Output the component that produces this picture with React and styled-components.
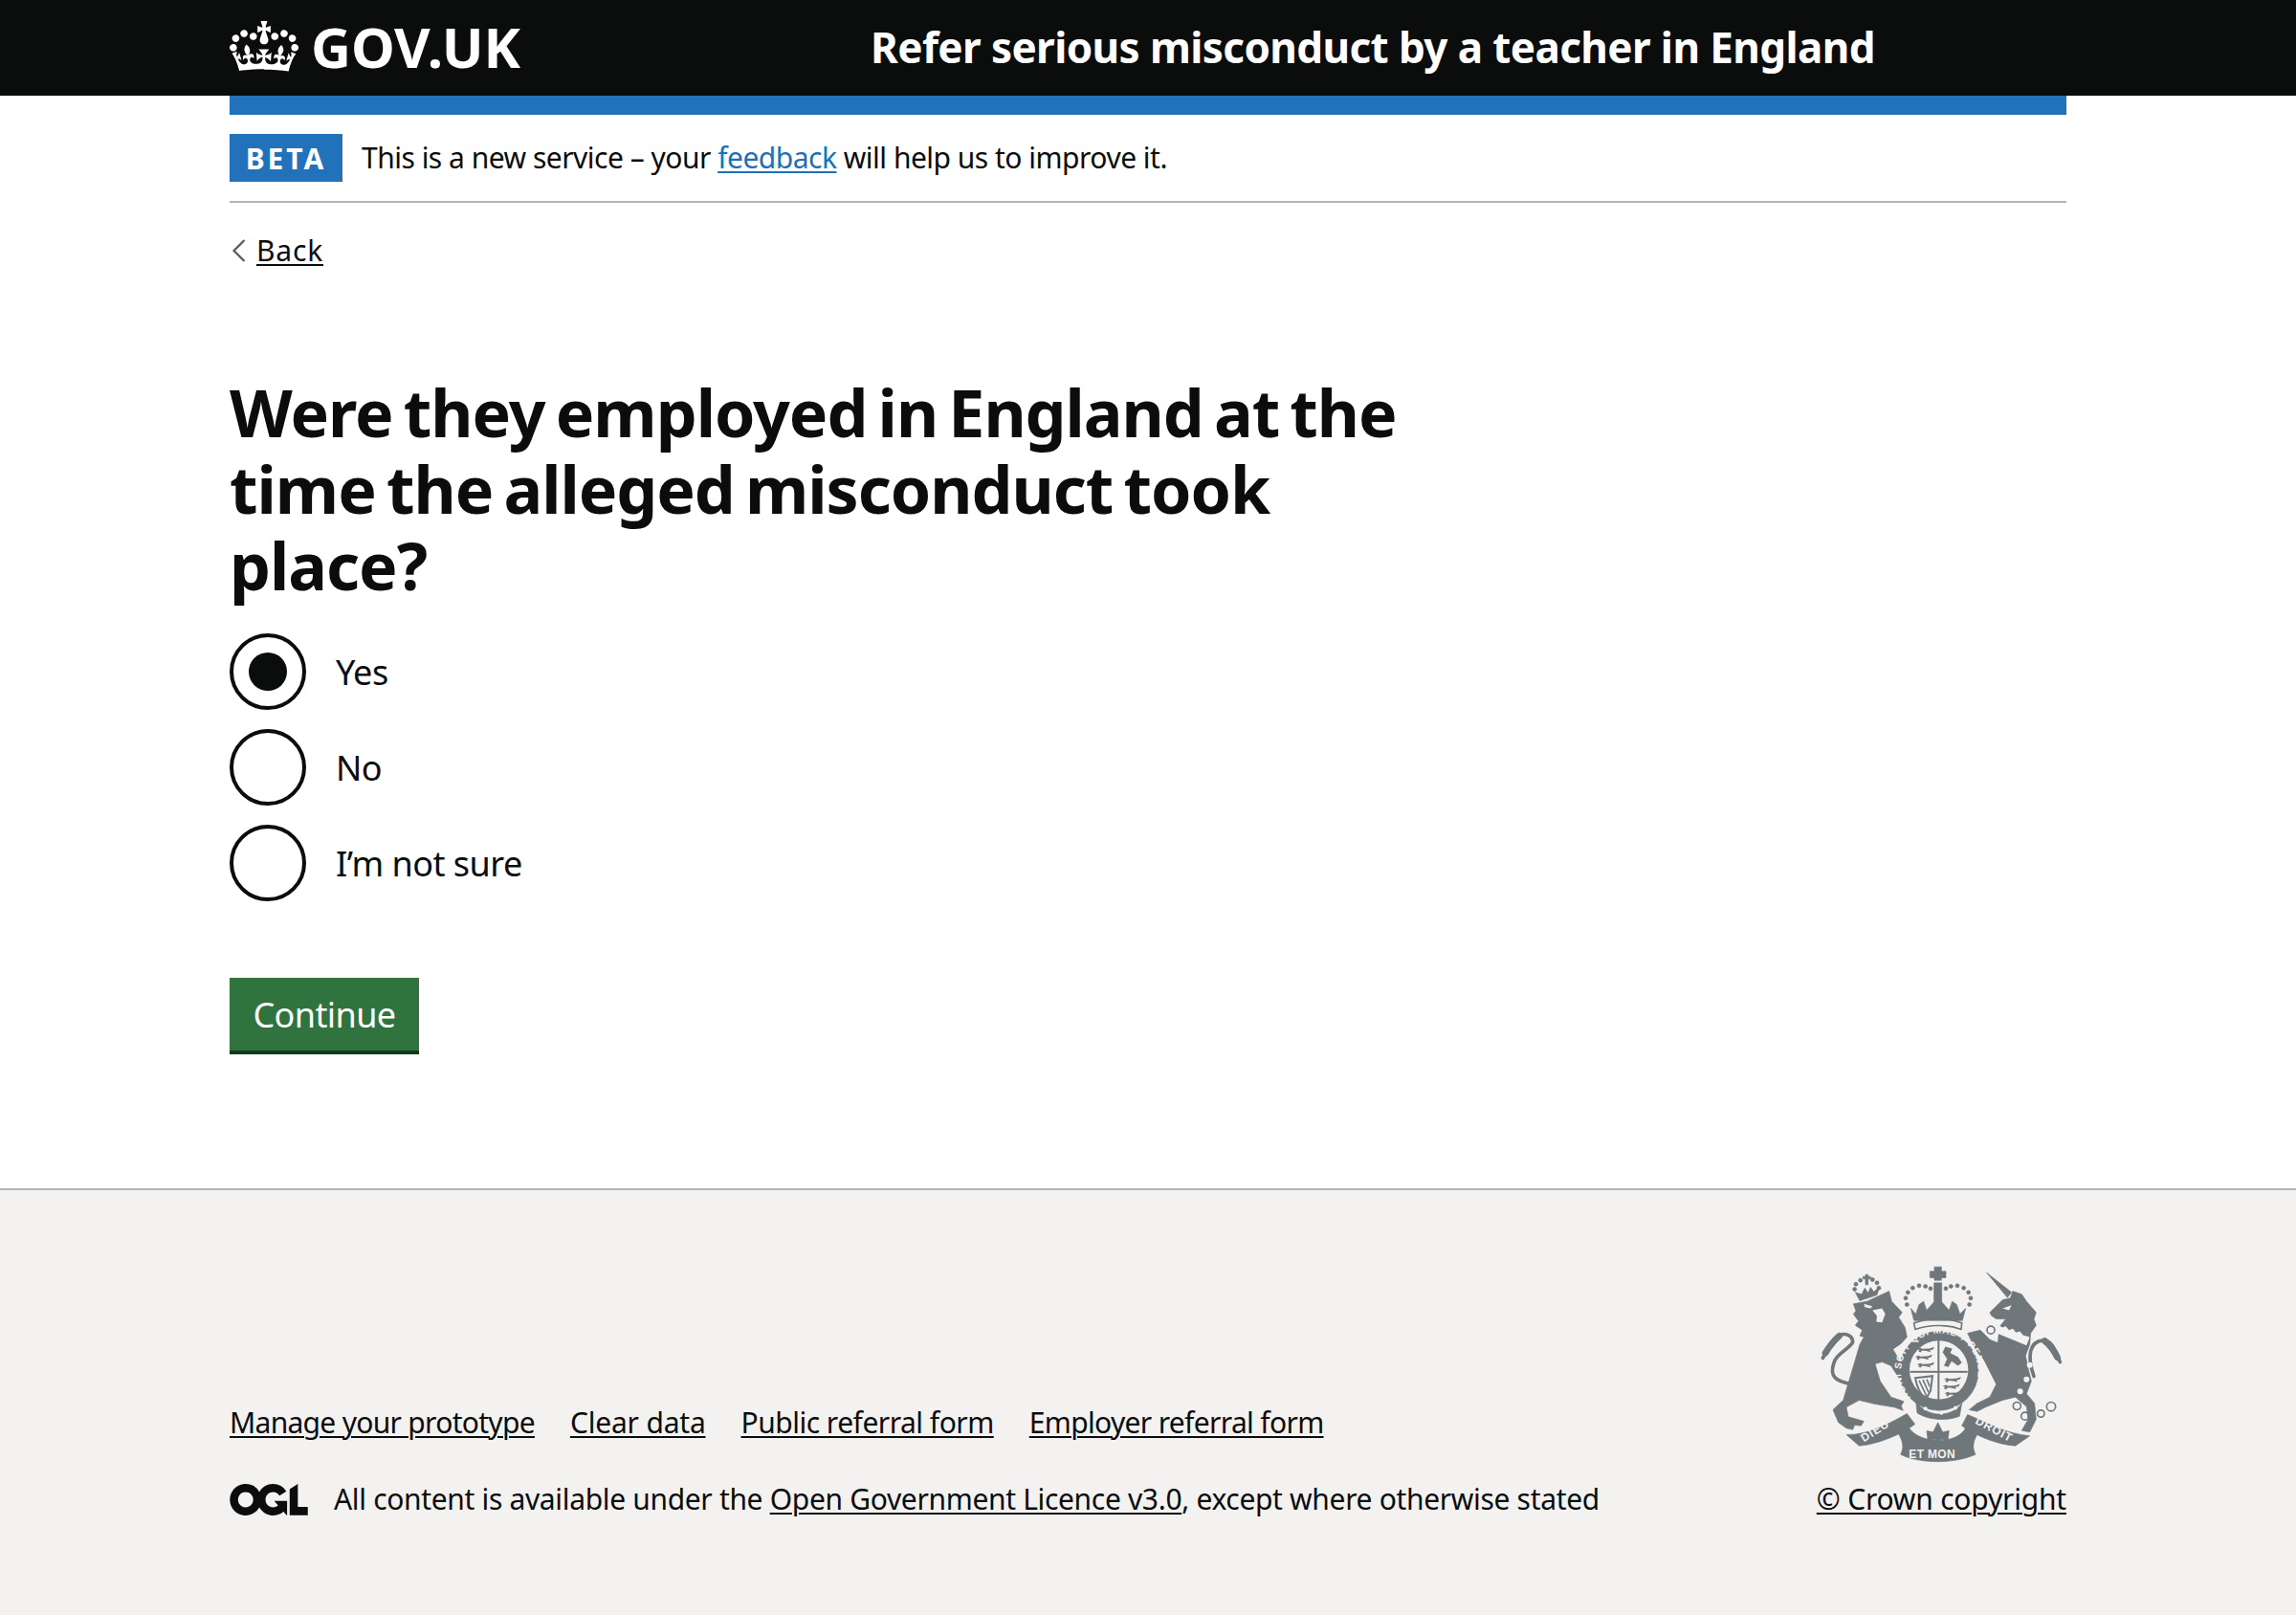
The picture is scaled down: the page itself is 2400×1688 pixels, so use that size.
import React from "react"
import styled, { createGlobalStyle } from "styled-components"

const black = "#0b0c0c"
const blue = "#2272bb"
const grey = "#b1b4b6"
const crest = "#6f777b"
const footerBg = "#f3f2f1"
const fontStack = `"Noto Sans", "Open Sans", Arial, sans-serif`

const GlobalStyle = createGlobalStyle`
    html, body {
        margin: 0;
        padding: 0;
        background: #fff;
        color: ${black};
        font-family: ${fontStack};
    }
    a {
        color: inherit;
        text-underline-offset: 3px;
        text-decoration-thickness: 2px;
    }
`

const Page = styled.div`
    min-height: 1688px;
    display: flex;
    flex-direction: column;
`

const Container = styled.div`
    width: 1920px;
    margin: 0 auto;
`

const Header = styled.header`
    background: ${black};
    height: 100px;
    color: #fff;
`

const HeaderRow = styled(Container)`
    height: 100px;
    padding-bottom: 3px;
    box-sizing: border-box;
    display: flex;
    align-items: center;
`

const LogoLink = styled.div`
    width: 670px;
    display: flex;
    align-items: center;
    gap: 13px;
`

const Wordmark = styled.span`
    font-size: 58px;
    font-weight: 700;
    letter-spacing: -0.1px;
    line-height: 1;
`

const ServiceName = styled.span`
    font-size: 44px;
    font-weight: 700;
    letter-spacing: -0.6px;
`

const BlueBar = styled(Container)`
    height: 20px;
    background: ${blue};
`

const Banner = styled(Container)`
    display: flex;
    align-items: center;
    gap: 20px;
    padding: 20px 0;
    border-bottom: 2px solid ${grey};
`

const Tag = styled.strong`
    width: 118px;
    height: 50px;
    background: ${blue};
    color: #fff;
    font-size: 30px;
    font-weight: 700;
    letter-spacing: 3px;
    display: flex;
    align-items: center;
    justify-content: center;
`

const SmallText = styled.span`
    font-size: 30px;
    line-height: 40px;
    letter-spacing: ${(p) => p.$spacing || "0"};
`

const BlueLink = styled.a`
    color: #1d70b8;
`

const BackRow = styled(Container)`
    display: flex;
    align-items: center;
    gap: 10px;
    margin-top: 30px;
    height: 40px;
    padding-left: 2px;
    box-sizing: border-box;
`

const Main = styled(Container)`
    padding-top: 110px;
    padding-bottom: 140px;
`

const Heading = styled.h1`
    width: 1280px;
    margin: -1px 0 31px;
    font-size: 68px;
    line-height: 80px;
    font-weight: 700;
    letter-spacing: -1px;
    word-spacing: -5.5px;
`

const RadioList = styled.div`
    display: flex;
    flex-direction: column;
    gap: 20px;
    margin-bottom: 80px;
`

const RadioRow = styled.label`
    display: flex;
    align-items: center;
    gap: 31px;
    height: 80px;
`

const RadioCircle = styled.span`
    width: 80px;
    height: 80px;
    box-sizing: border-box;
    border: 4px solid ${black};
    border-radius: 50%;
    display: flex;
    align-items: center;
    justify-content: center;

    &::after {
        content: "";
        display: ${(p) => (p.$checked ? "block" : "none")};
        width: 40px;
        height: 40px;
        border-radius: 50%;
        background: ${black};
    }
`

const RadioLabel = styled.span`
    font-size: 36px;
    line-height: 50px;
    letter-spacing: -0.5px;
    padding-top: 2px;
`

const Button = styled.button`
    display: block;
    width: 198px;
    height: 80px;
    box-sizing: border-box;
    padding: 0 0 4px;
    border: 0;
    background: #31733f;
    box-shadow: inset 0 -4px 0 #0f3a1d;
    color: #fff;
    font-family: ${fontStack};
    font-size: 36px;
    letter-spacing: -0.6px;
`

const Footer = styled.footer`
    flex: 1;
    background: ${footerBg};
    border-top: 2px solid ${grey};
`

const FooterRow = styled(Container)`
    display: flex;
    justify-content: space-between;
    align-items: flex-end;
    padding-top: 66px;
`

const FooterLinks = styled.div`
    display: flex;
    gap: 37px;
    margin-bottom: 40px;
`

const FooterMeta = styled.div`
    display: flex;
    align-items: center;
    gap: 27px;
`

const FooterLeft = styled.div`
    display: flex;
    flex-direction: column;
`

const FooterRight = styled.div`
    display: flex;
    flex-direction: column;
    align-items: flex-end;
    gap: 10px;
`

const crownPath =
    "M25 30.2c3.5 1.5 7.7-.2 9.1-3.7 1.5-3.6-.2-7.8-3.9-9.2-3.6-1.4-7.6.3-9.1 3.9-1.4 3.5.3 7.5 3.9 9zM9 39.5c3.6 1.5 7.8-.2 9.2-3.7 1.5-3.6-.2-7.8-3.9-9.1-3.6-1.5-7.6.2-9.1 3.8-1.4 3.5.3 7.5 3.8 9zM4.4 57.2c3.5 1.5 7.7-.2 9.1-3.8 1.5-3.6-.2-7.7-3.9-9.1-3.5-1.5-7.6.3-9.1 3.8-1.4 3.5.3 7.6 3.9 9.1zm38.3-21.4c3.5 1.5 7.7-.2 9.1-3.8 1.5-3.6-.2-7.7-3.9-9.1-3.6-1.5-7.6.3-9.1 3.8-1.3 3.6.4 7.7 3.9 9.1zm64.4-5.6c-3.6 1.5-7.8-.2-9.1-3.7-1.5-3.6.2-7.8 3.8-9.2 3.6-1.4 7.7.3 9.2 3.9 1.3 3.5-.4 7.5-3.9 9zm15.9 9.3c-3.6 1.5-7.7-.2-9.1-3.7-1.5-3.6.2-7.8 3.7-9.1 3.6-1.5 7.7.2 9.2 3.8 1.5 3.5-.3 7.5-3.8 9zm4.7 17.7c-3.6 1.5-7.8-.2-9.2-3.8-1.5-3.6.2-7.7 3.9-9.1 3.6-1.5 7.7.3 9.2 3.8 1.3 3.5-.4 7.6-3.9 9.1zM89.3 35.8c-3.6 1.5-7.8-.2-9.2-3.8-1.4-3.6.2-7.7 3.9-9.1 3.6-1.5 7.7.3 9.2 3.8 1.4 3.6-.3 7.7-3.9 9.1zM69.7 17.7l8.9 4.7V9.3l-8.9 2.8c-.2-.3-.5-.6-.9-.9L72.4 0H59.6l3.6 11.2c-.3.3-.6.5-.9.9l-8.8-2.8v13.1l8.8-4.7c.3.3.6.7.9.9l-5 15.4v.1c-.2.8-.4 1.6-.4 2.4 0 4.1 3.1 7.5 7 8.1h.2c.3 0 .7.1 1 .1.4 0 .7 0 1-.1h.2c4-.6 7.1-4.1 7.1-8.1 0-.8-.1-1.7-.4-2.4V34l-5.1-15.4c.4-.2.7-.6 1-.9zM66 92.8c16.9 0 32.8 1.1 47.1 3.2 4-16.9 8.9-26.7 14-33.5l-9.6-3.4c1 4.9 1.1 7.2 0 10.2-1.5-1.4-3-4.3-4.2-8.7L108.6 76c2.8-2 5-3.2 7.5-3.3-4.4 9.4-10 11.9-13.6 11.2-4.3-.8-6.3-4.6-5.6-7.9 1-4.7 5.7-5.9 8-.5 4.3-8.7-3-11.4-7.6-8.8 7.1-7.2 7.9-13.5 2.1-21.1-8 6.1-8.1 12.3-4.5 20.8-4.7-5.4-12.1-2.5-9.5 6.2 3.4-5.2 7.9-2 7.2 3.1-.6 4.3-6.4 7.8-13.5 7.2-10.3-.9-10.9-8-11.2-13 2.5-.5 7.1 1.8 11 7.3L80.2 60c-4.1 4.4-8 5.3-12.3 5.4 1.4-4.4 8-11.6 8-11.6H55.5s6.4 7.2 7.9 11.6c-4.2-.1-8-1-12.3-5.4l1.4 16.4c3.9-5.5 8.5-7.7 10.9-7.3-.3 5-.7 12.1-10.9 13-7.2.6-12.9-2.9-13.5-7.2-.7-5 3.8-8.3 7.1-3.1 2.7-8.7-4.6-11.6-9.4-6.2 3.7-8.5 3.6-14.7-4.6-20.8-5.8 7.6-5 13.9 2.2 21.1-4.7-2.6-11.9.1-7.7 8.8 2.3-5.5 7.1-4.2 8.1.5.7 3.3-1.3 7.1-5.7 7.9-3.5.7-9-1.8-13.5-11.2 2.5.1 4.7 1.3 7.5 3.3l-4.7-15.4c-1.2 4.4-2.7 7.2-4.3 8.7-1.1-3-.9-5.3 0-10.2l-9.5 3.4c5 6.9 9.9 16.7 14 33.5 14.8-2.1 30.8-3.2 47.7-3.2z"

const oglPath =
    "M421.5 142.8V.1l-50.7 32.3v161.1h112.4v-50.7zm-122.3-9.6A47.12 47.12 0 0 1 221 97.8c0-26 21.1-47.1 47.1-47.1 16.7 0 31.4 8.7 39.7 21.8l42.7-27.2A97.63 97.63 0 0 0 268.1 0c-36.5 0-68.3 20.1-85.1 49.7A98 98 0 0 0 97.8 0C43.9 0 0 43.9 0 97.8s43.9 97.8 97.8 97.8c36.5 0 68.3-20.1 85.1-49.7a97.76 97.76 0 0 0 149.6 25.4l19.4 22.2h3v-87.8h-80l24.3 27.5zM97.8 145c-26 0-47.1-21.1-47.1-47.1s21.1-47.1 47.1-47.1 47.2 21 47.2 47S123.8 145 97.8 145"

function Crown() {
    return (
        <svg width="72" height="53" viewBox="0 0 132 97" fill="#fff">
            <path d={crownPath} />
        </svg>
    )
}

function OglLogo() {
    return (
        <svg width="82" height="33" viewBox="0 0 483.2 195.7" fill={black}>
            <path d={oglPath} />
        </svg>
    )
}

// three walking lions for the England quarters
function Passant({ x, y }) {
    return (
        <g transform={`translate(${x} ${y})`}>
            <path d="M0 4 L10 0 L16 3 L38 2 L54 -3 L50 5 L40 7 L42 13 L34 11 L24 9 L14 9 L12 14 L4 12 L7 7 Z" />
        </g>
    )
}

// Royal arms, drawn by eye. The viewBox is in 3x px so it lines up with zoomed crops.
function RoyalArms() {
    const crownDots = [
        [340, 160], [336, 140], [343, 122], [358, 108], [378, 101], [398, 103], [414, 110],
        [462, 110], [478, 103], [498, 101], [518, 108], [533, 122], [540, 140], [536, 160],
    ]
    const lionCrownDots = [[176, 112], [180, 96], [194, 84], [232, 82], [246, 92], [252, 108]]
    const rings = [[685, 478, 12], [710, 510, 12], [760, 502, 11], [792, 480, 14], [603, 240, 12], [592, 325, 12]]
    const spots = [[725, 350, 9], [715, 395, 9], [695, 432, 9]]
    return (
        <svg width="280" height="227" viewBox="0 0 840 680">
            <defs>
                <path id="garter-arc" d="M352 452 A121 121 0 1 1 522 462" />
            </defs>
            <g fill={crest} stroke={crest} strokeWidth="2" strokeLinejoin="round">
                {/* lion */}
                <path d="M172 158 L215 150 L284 118 L292 150 L325 185 L314 200 L334 232 L340 262 L322 282 L296 300 L338 372 L345 395 L330 390 L322 402 L308 380 L290 352 L262 340 L240 346 L256 400 L290 450 L330 464 L322 478 L328 492 L300 482 L240 472 L190 460 L150 482 L156 512 L205 526 L196 540 L176 538 L170 552 L150 548 L125 530 L108 490 L140 460 L155 410 L176 340 L192 285 L205 262 L192 258 L200 240 L178 225 L188 212 L172 190 L180 180 Z" />
                {/* lion crown */}
                <path d="M178 122 L198 128 L208 108 L218 124 L226 106 L236 120 L254 104 L246 130 L192 148 Z" />
                <path d="M202 72 h8 v-6 h8 v6 h8 v8 h-8 v18 h-8 v-18 h-8 Z" />
                {lionCrownDots.map(([x, y]) => (
                    <circle key={x} cx={x} cy={y} r="6" />
                ))}
                {/* unicorn */}
                <path d="M590 60 L668 122 L655 138 Z" />
                <path d="M600 185 L640 145 L664 140 L672 118 L700 128 L715 150 L745 185 L738 205 L745 225 L728 250 L725 285 L712 320 L720 360 L730 400 L715 440 L740 470 L745 520 L725 560 L700 555 L720 520 L715 480 L680 450 L640 460 L590 480 L560 495 L535 490 L560 470 L600 450 L620 410 L600 370 L580 330 L560 310 L530 250 L570 240 L600 270 L625 280 L630 230 L650 205 L620 205 L605 195 Z" />
                {/* large crown */}
                <path d="M426 42 h22 v14 h14 v20 h-14 v8 h-22 v-8 h-14 v-20 h14 Z" />
                <rect x="425" y="92" width="24" height="62" />
                <path d="M352 172 L368 190 L378 160 L392 150 L402 178 L437 138 L472 178 L482 150 L496 160 L506 190 L524 172 L514 210 L362 210 Z" />
                {crownDots.map(([x, y]) => (
                    <circle key={x} cx={x} cy={y} r="6" />
                ))}
                <path d="M362 218 C410 200 465 200 512 218 L510 238 C470 222 410 222 366 238 Z" fill="none" strokeWidth="5" />
                {/* garter */}
                <circle cx="440" cy="368" r="124" />
                <path d="M368 462 C400 516 480 516 512 470 L505 510 C470 525 410 525 372 500 Z" />
                {/* ribbons */}
                <path d="M150 568 C220 570 290 530 340 502 L365 535 C320 570 240 600 190 603 Z" />
                <path d="M310 560 L345 545 C380 600 500 600 525 545 L565 560 C545 590 545 610 555 630 C490 660 380 660 320 630 C330 610 330 590 310 560 Z" />
                <path d="M530 505 C590 530 650 565 725 572 L680 603 C630 600 560 575 512 540 Z" />
                {/* fleur-de-lis */}
                <path d="M437 530 L452 560 L472 556 L468 588 L446 582 L437 606 L428 582 L406 588 L402 556 L422 560 Z" />
            </g>
            <g fill="none" stroke={crest} strokeLinecap="round">
                <path d="M165 410 C115 400 95 385 112 340 C122 310 160 300 170 278 C170 258 148 248 128 256 C108 264 92 300 76 328" strokeWidth="11" />
                <path d="M128 258 C112 272 96 292 84 312" strokeWidth="20" />
                <path d="M738 385 C715 320 725 275 768 272 C800 275 805 310 820 340" strokeWidth="11" />
                <path d="M772 274 C790 288 802 305 812 326" strokeWidth="20" />
                {rings.map(([x, y, r]) => (
                    <circle key={x} cx={x} cy={y} r={r} strokeWidth="5" />
                ))}
            </g>
            <g fill={footerBg}>
                {/* unicorn collar */}
                <path d="M628 225 L640 232 L650 228 L660 240 L672 236 L682 248 L694 244 L704 256 L725 262 L715 288 L622 250 Z" />
                {spots.map(([x, y, r]) => (
                    <circle key={y} cx={x} cy={y} r={r} />
                ))}
                {/* faces */}
                <path d="M205 158 L232 166 L226 172 L208 168 Z" />
                <path d="M232 178 L262 172 L272 190 L262 216 L244 214 L246 196 Z" />
                <path d="M640 172 L668 162 L660 178 Z" />
                {/* shield */}
                <circle cx="440" cy="365" r="92" />
                <circle cx="398" cy="486" r="6" />
                <circle cx="448" cy="500" r="6" />
                <circle cx="492" cy="484" r="6" />
            </g>
            <g fill={crest}>
                <rect x="436" y="272" width="6" height="190" />
                <rect x="350" y="368" width="180" height="6" />
                <Passant x={372} y={296} />
                <Passant x={366} y={320} />
                <Passant x={372} y={344} />
                <Passant x={456} y={390} />
                <Passant x={452} y={412} />
                <Passant x={458} y={434} />
                {/* lion rampant */}
                <path d="M460 292 L482 298 L476 312 L500 324 L512 342 L500 352 L480 338 L470 356 L456 352 L466 330 L452 310 Z" />
                {/* harp */}
                <path d="M366 390 L420 384 L414 430 L398 460 C382 440 370 415 366 390 Z" fill="none" stroke={crest} strokeWidth="6" />
                <path d="M378 398 L402 448 M390 396 L408 436 M402 394 L412 418" fill="none" stroke={crest} strokeWidth="5" />
            </g>
            <g fill={footerBg} fontFamily="Liberation Sans, Arial, sans-serif" fontWeight="700">
                <text fontSize="30" letterSpacing="2.5">
                    <textPath href="#garter-arc">HONI SOIT QUI MAL Y PENSE</textPath>
                </text>
                <text fontSize="36" x="205" y="592" transform="rotate(-32 205 592)" letterSpacing="3">DIEU</text>
                <text fontSize="36" x="346" y="642" letterSpacing="1">ET MON</text>
                <text fontSize="36" x="552" y="532" transform="rotate(28 552 532)" letterSpacing="3">DROIT</text>
            </g>
        </svg>
    )
}

function Chevron() {
    return (
        <svg width="16" height="24" viewBox="0 0 16 24" fill="none" stroke="#505a5f" strokeWidth="2.2">
            <path d="M13.5 1 L2.5 12 L13.5 23" />
        </svg>
    )
}

const options = [
    { label: "Yes", checked: true },
    { label: "No" },
    { label: "I’m not sure" },
]

const footerLinks = [
    { label: "Manage your prototype", spacing: "-0.7px" },
    { label: "Clear data", spacing: "-0.2px" },
    { label: "Public referral form", spacing: "-0.5px" },
    { label: "Employer referral form", spacing: "-0.66px" },
]

export default function App() {
    return (
        <Page>
            <GlobalStyle />
            <Header>
                <HeaderRow>
                    <LogoLink>
                        <Crown />
                        <Wordmark>GOV.UK</Wordmark>
                    </LogoLink>
                    <ServiceName>Refer serious misconduct by a teacher in England</ServiceName>
                </HeaderRow>
            </Header>
            <BlueBar />
            <Banner>
                <Tag>BETA</Tag>
                <SmallText $spacing="-0.5px">
                    This is a new service – your <BlueLink href="#">feedback</BlueLink> will help us to improve it.
                </SmallText>
            </Banner>
            <BackRow>
                <Chevron />
                <SmallText $spacing="0.8px">
                    <a href="#">Back</a>
                </SmallText>
            </BackRow>
            <Main>
                <Heading>Were they employed in England at the time the alleged misconduct took place?</Heading>
                <RadioList>
                    {options.map((option) => (
                        <RadioRow key={option.label}>
                            <RadioCircle $checked={option.checked} />
                            <RadioLabel>{option.label}</RadioLabel>
                        </RadioRow>
                    ))}
                </RadioList>
                <Button>Continue</Button>
            </Main>
            <Footer>
                <FooterRow>
                    <FooterLeft>
                        <FooterLinks>
                            {footerLinks.map((link) => (
                                <SmallText key={link.label} $spacing={link.spacing}>
                                    <a href="#">{link.label}</a>
                                </SmallText>
                            ))}
                        </FooterLinks>
                        <FooterMeta>
                            <OglLogo />
                            <SmallText $spacing="-0.33px">
                                All content is available under the <a href="#">Open Government Licence v3.0</a>, except
                                where otherwise stated
                            </SmallText>
                        </FooterMeta>
                    </FooterLeft>
                    <FooterRight>
                        <RoyalArms />
                        <SmallText $spacing="-0.2px">
                            <a href="#">© Crown copyright</a>
                        </SmallText>
                    </FooterRight>
                </FooterRow>
            </Footer>
        </Page>
    )
}
